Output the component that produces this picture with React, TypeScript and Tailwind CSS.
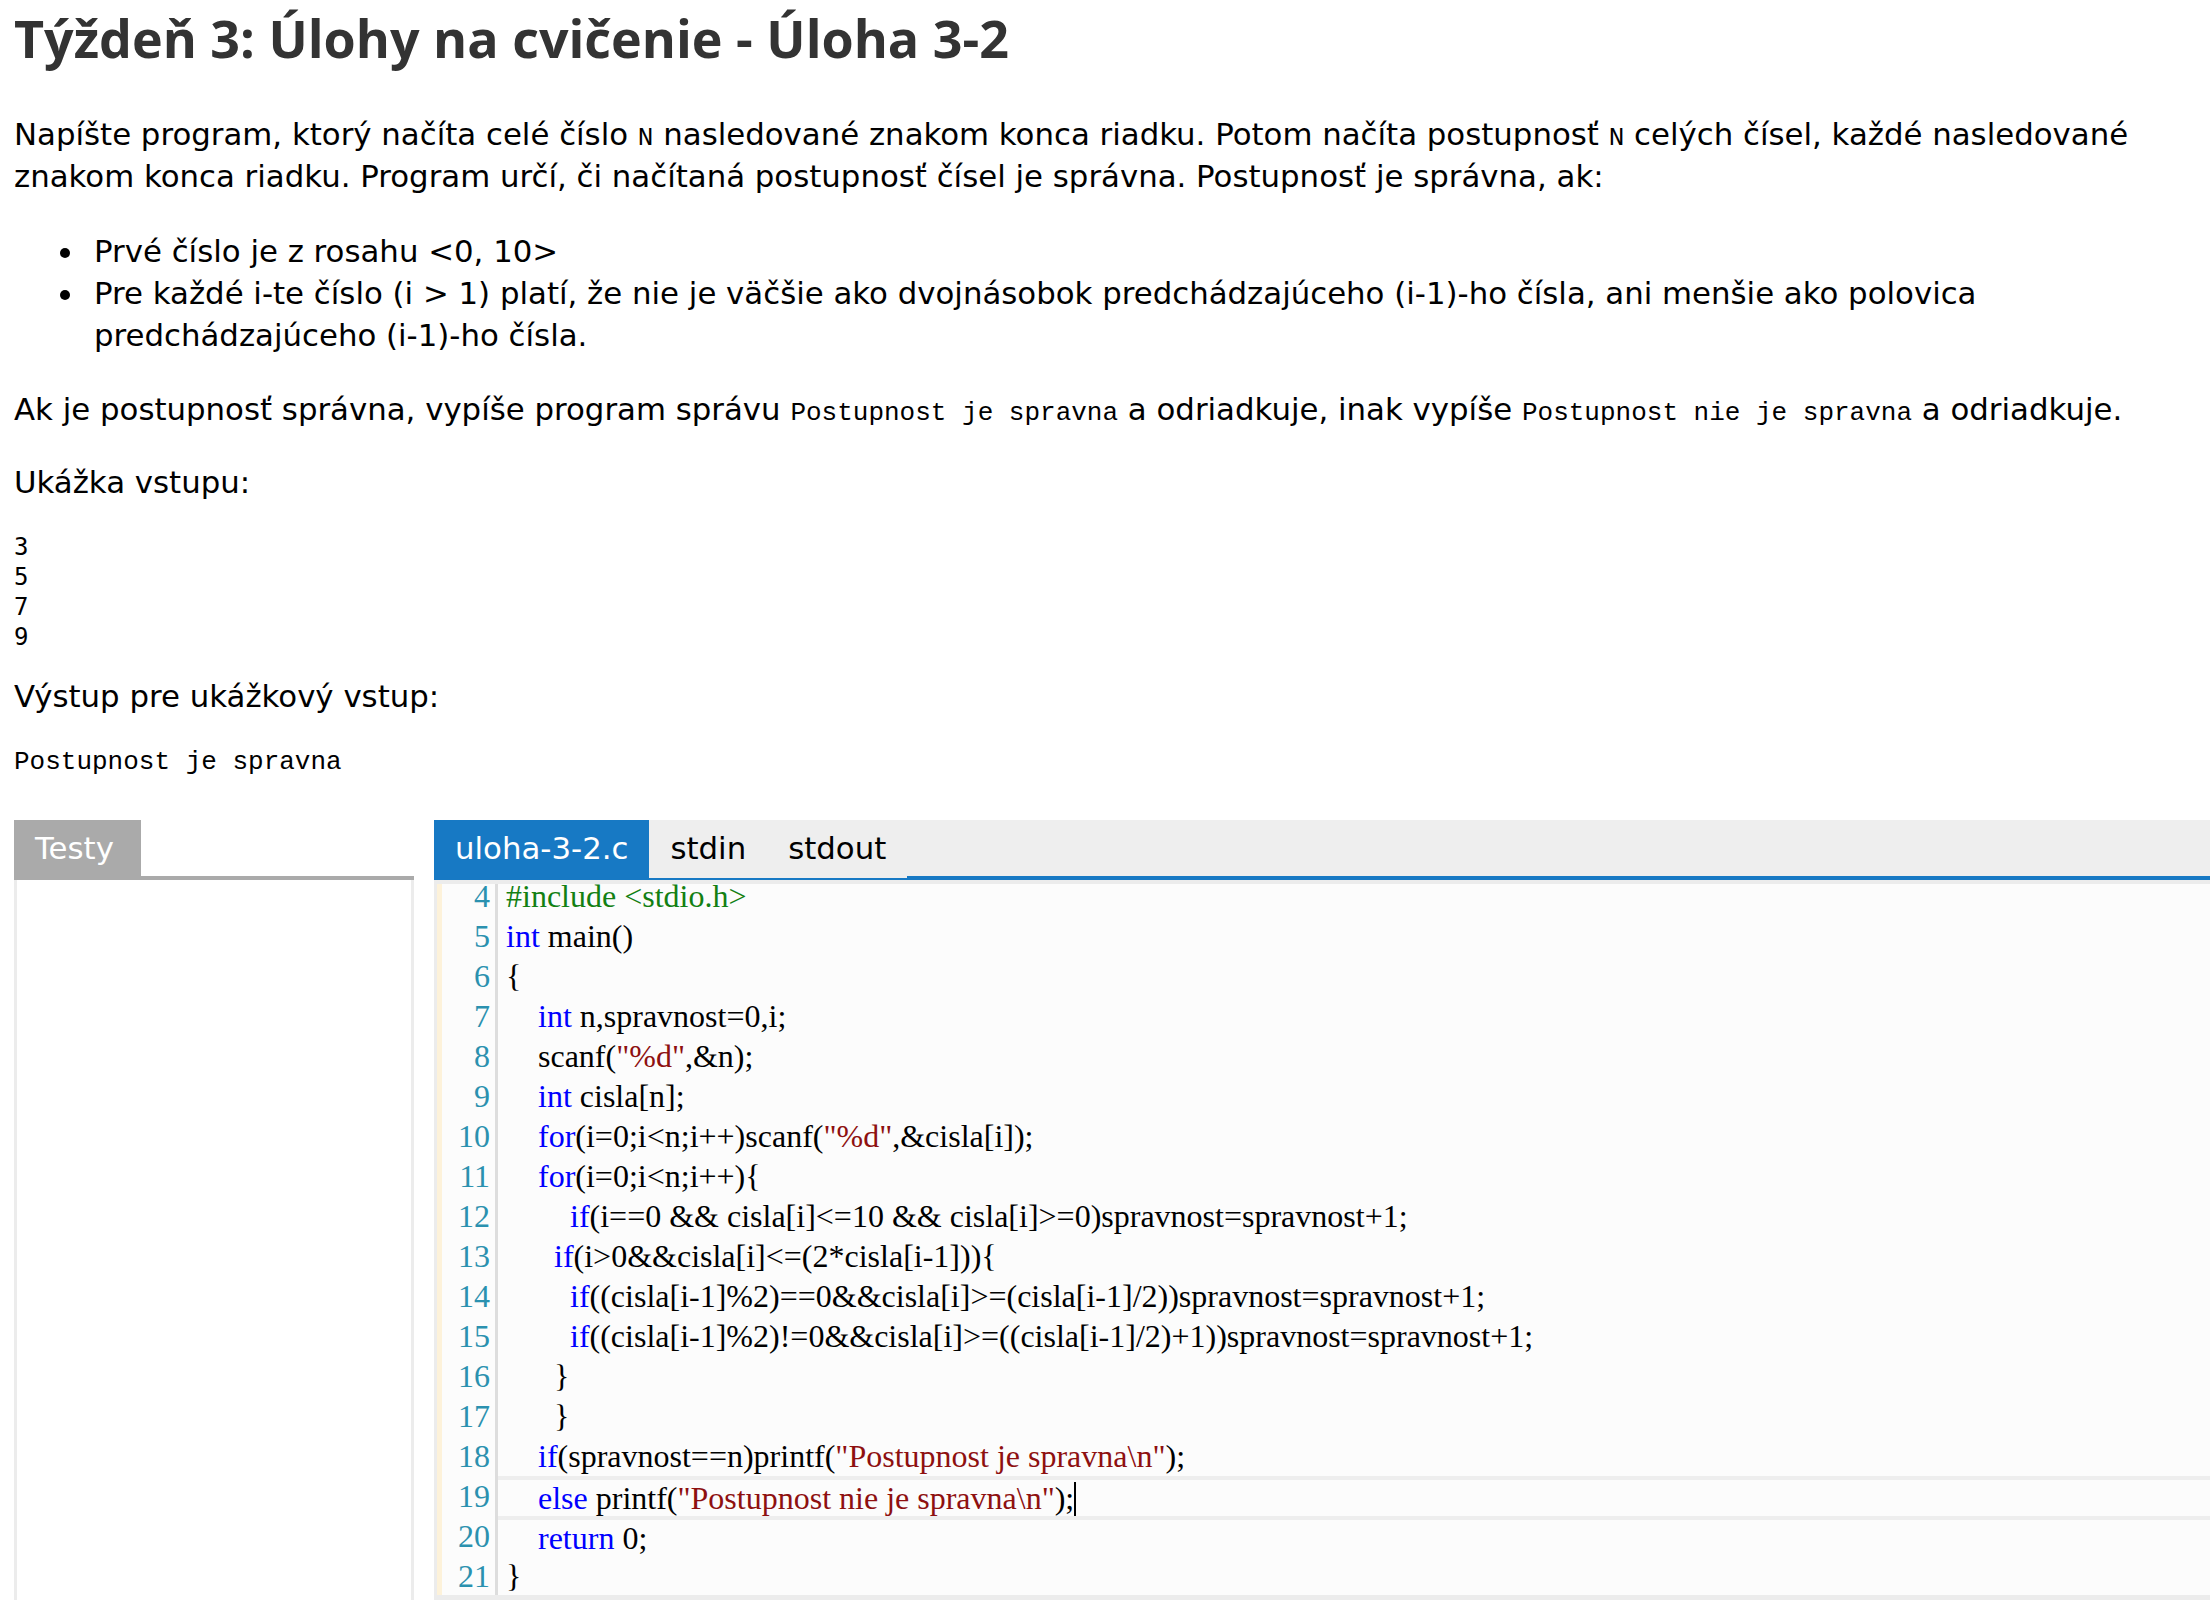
import React from "react";

const KW = "text-[#0000ff]";
const STR = "text-[#8e1010]";
const INC = "text-[#138013]";

type Seg = [string, string?];

const lines: { n: number; segs: Seg[] }[] = [
  { n: 4, segs: [["#include <stdio.h>", INC]] },
  { n: 5, segs: [["int", KW], [" main()"]] },
  { n: 6, segs: [["{"]] },
  { n: 7, segs: [["    "], ["int", KW], [" n,spravnost=0,i;"]] },
  { n: 8, segs: [["    scanf("], ['"%d"', STR], [",&n);"]] },
  { n: 9, segs: [["    "], ["int", KW], [" cisla[n];"]] },
  { n: 10, segs: [["    "], ["for", KW], ["(i=0;i<n;i++)scanf("], ['"%d"', STR], [",&cisla[i]);"]] },
  { n: 11, segs: [["    "], ["for", KW], ["(i=0;i<n;i++){"]] },
  { n: 12, segs: [["        "], ["if", KW], ["(i==0 && cisla[i]<=10 && cisla[i]>=0)spravnost=spravnost+1;"]] },
  { n: 13, segs: [["      "], ["if", KW], ["(i>0&&cisla[i]<=(2*cisla[i-1])){"]] },
  { n: 14, segs: [["        "], ["if", KW], ["((cisla[i-1]%2)==0&&cisla[i]>=(cisla[i-1]/2))spravnost=spravnost+1;"]] },
  { n: 15, segs: [["        "], ["if", KW], ["((cisla[i-1]%2)!=0&&cisla[i]>=((cisla[i-1]/2)+1))spravnost=spravnost+1;"]] },
  { n: 16, segs: [["      }"]] },
  { n: 17, segs: [["      }"]] },
  { n: 18, segs: [["    "], ["if", KW], ["(spravnost==n)printf("], ['"Postupnost je spravna\\n"', STR], [");"]] },
  { n: 19, segs: [["    "], ["else", KW], [" printf("], ['"Postupnost nie je spravna\\n"', STR], [");"]] },
  { n: 20, segs: [["    "], ["return", KW], [" 0;"]] },
  { n: 21, segs: [["}"]] },
];

function Code({ children }: { children: React.ReactNode }) {
  return <code className="font-['Liberation_Mono',monospace] text-[26px] leading-none">{children}</code>;
}

function Bullet({ children }: { children: React.ReactNode }) {
  return (
    <li className="flex">
      <span className="w-[10px] h-[10px] rounded-full bg-black mt-[18px] mr-[24px] shrink-0" />
      <span>{children}</span>
    </li>
  );
}

export default function App() {
  return (
    <div className="bg-white text-black pl-[14px] pt-[8px] font-['DejaVu_Sans',sans-serif] text-[30.8px] leading-[42px] w-[2210px] overflow-hidden">
      <h1 className="font-['Open_Sans',sans-serif] font-bold text-[52px] leading-[60px] text-[#333]">
        Týždeň 3: Úlohy na cvičenie - Úloha 3-2
      </h1>

      <p className="mt-[45px] w-[2180px]">
        Napíšte program, ktorý načíta celé číslo <Code>N</Code> nasledované znakom konca riadku. Potom načíta postupnosť{" "}
        <Code>N</Code> celých čísel, každé nasledované znakom konca riadku. Program určí, či načítaná postupnosť čísel je
        správna. Postupnosť je správna, ak:
      </p>

      <ul className="mt-[33px] pl-[46px] w-[2180px]">
        <Bullet>Prvé číslo je z rosahu &lt;0, 10&gt;</Bullet>
        <Bullet>
          Pre každé i-te číslo (i &gt; 1) platí, že nie je väčšie ako dvojnásobok predchádzajúceho (i-1)-ho čísla, ani
          menšie ako polovica predchádzajúceho (i-1)-ho čísla.
        </Bullet>
      </ul>

      <p className="mt-[32px] w-[2180px]">
        Ak je postupnosť správna, vypíše program správu <Code>Postupnost je spravna</Code> a odriadkuje, inak vypíše{" "}
        <Code>Postupnost nie je spravna</Code> a odriadkuje.
      </p>

      <p className="mt-[31px]">Ukážka vstupu:</p>

      <pre className="mt-[29px] font-['DejaVu_Sans_Mono',monospace] text-[24px] leading-[30px]">{"3\n5\n7\n9"}</pre>

      <p className="mt-[23px]">Výstup pre ukážkový vstup:</p>

      <pre className="mt-[30px] font-['Liberation_Mono',monospace] text-[26px] leading-[30px]">Postupnost je spravna</pre>

      <div className="mt-[43px] flex gap-[20px]">
        {/* Left panel */}
        <div className="w-[400px] shrink-0 flex flex-col">
          <div className="flex h-[56px]">
            <div className="bg-[#aaaaaa] text-white px-[21px] leading-[56px] w-[127px]">Testy</div>
          </div>
          <div className="h-[4px] bg-[#aaaaaa]" />
          <div className="h-[720px] border-x-[3px] border-[#ececec] bg-white" />
        </div>

        {/* Editor */}
        <div className="flex-1 min-w-0 flex flex-col">
          <div className="flex h-[60px] bg-[#eeeeee]">
            <div className="bg-[#1779c4] text-white px-[21px] leading-[56px] h-[60px]">uloha-3-2.c</div>
            <div className="text-black px-[21px] leading-[56px] h-[60px] border-b-2 border-[#1779c4]">stdin</div>
            <div className="text-black px-[21px] leading-[56px] h-[60px] border-b-2 border-[#1779c4]">stdout</div>
            <div className="flex-1 h-[60px] border-b-4 border-[#1779c4]" />
          </div>
          <div className="h-[720px] border-l-[3px] border-t-4 border-b-[5px] border-[#ececec] bg-[#fcfcfc] overflow-hidden">
            <div className="-mt-[8px] border-l-[5px] border-[#fdf2da] font-['Liberation_Serif',serif] text-[32px] leading-[40px]">
              {lines.map((l) => {
                const bordered = l.n === 19 || l.n === 20;
                return (
                  <div key={l.n} className="flex h-[40px]">
                    <div className="w-[56px] shrink-0 border-r-[3px] border-[#dddddd] text-right pr-[5px] text-[#2b91af]">
                      {l.n}
                    </div>
                    <div
                      className={
                        bordered
                          ? "flex-1 pl-[8px] whitespace-pre border-t-4 border-[#eeeeee] leading-[36px]"
                          : "flex-1 pl-[8px] whitespace-pre"
                      }
                    >
                      {l.segs.map((s, i) => (
                        <span key={i} className={s[1] ?? ""}>
                          {s[0]}
                        </span>
                      ))}
                      {l.n === 19 && <span className="inline-block w-[2px] h-[36px] bg-black align-middle -mt-[4px]" />}
                    </div>
                  </div>
                );
              })}
            </div>
          </div>
        </div>
      </div>
    </div>
  );
}
